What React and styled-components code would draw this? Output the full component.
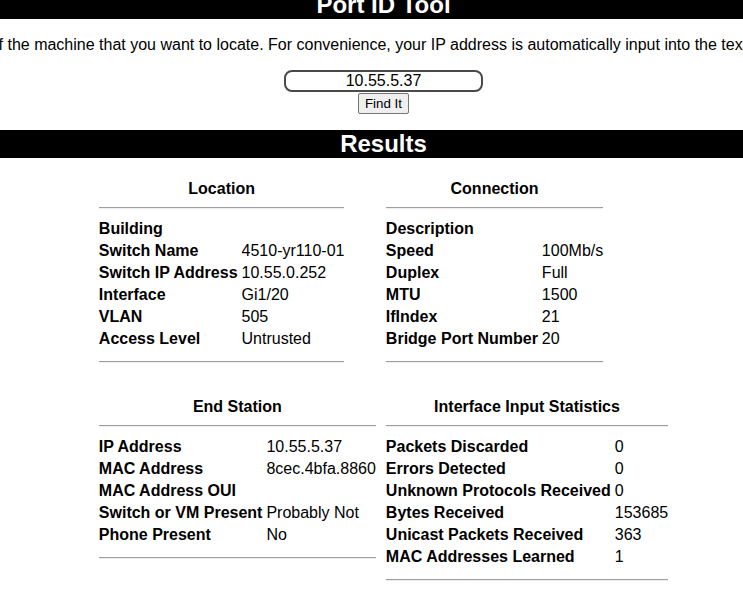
import React from "react";
import styled, { createGlobalStyle } from "styled-components";

const Global = createGlobalStyle`
  html, body { margin: 0; padding: 0; overflow: hidden; background: #fff; }
  body { font-family: "Liberation Sans", Arial, sans-serif; color: #000; }
`;

const Page = styled.div`
  width: 767px;
  display: flex;
  flex-direction: column;
  align-items: stretch;
`;

const Banner = styled.h1`
  margin: ${(p) => p.$top || 0}px 0 0 0;
  height: 28px;
  line-height: 28px;
  background: #000;
  color: #fff;
  font-size: 24px;
  font-weight: bold;
  text-align: center;
`;

const IntroRow = styled.div`
  display: flex;
  justify-content: center;
  margin: 17px 0 16px;
`;

const Intro = styled.p`
  margin: 0;
  flex: none;
  white-space: nowrap;
  font-size: 16px;
  line-height: 18px;
`;

const Form = styled.form`
  display: flex;
  flex-direction: column;
  align-items: center;
  gap: 1px;
`;

const AddressInput = styled.input`
  box-sizing: border-box;
  width: 199px;
  height: 22px;
  border: 2px solid #4a4a4a;
  border-radius: 8px;
  padding: 0 4px;
  text-align: center;
  font-family: "Liberation Sans", Arial, sans-serif;
  font-size: 16px;
  color: #000;
  outline: none;
`;

const FindButton = styled.button`
  box-sizing: border-box;
  height: 21px;
  padding: 0 6px;
  background: #efefef;
  border: 1px solid #767676;
  border-radius: 2px;
  font-family: "Liberation Sans", Arial, sans-serif;
  font-size: 13.33px;
  color: #000;
`;

const ResultsGrid = styled.div`
  margin-top: 20px;
  display: grid;
  grid-template-columns: auto auto;
  justify-content: center;
  column-gap: 10px;
  row-gap: 33px;
  align-items: start;
`;

const Section = styled.section`
  display: grid;
  grid-template-columns: auto auto;
  column-gap: 4px;
  width: max-content;
  font-size: 16px;
  line-height: 22px;
`;

const Title = styled.h2`
  grid-column: 1 / -1;
  margin: 0;
  font-size: 16px;
  line-height: 22px;
  font-weight: bold;
  text-align: center;
`;

const Rule = styled.div`
  grid-column: 1 / -1;
  margin: ${(p) => (p.$bottom ? "11px 0 0" : "7px 0 9px")};
  height: 0;
  border-top: 1px solid #9e9e9e;
  border-bottom: 1px solid #eeeeee;
`;

const Label = styled.div`
  font-weight: bold;
  white-space: nowrap;
`;

const Value = styled.div`
  white-space: nowrap;
`;

const sections = [
  {
    title: "Location",
    rows: [
      ["Building", ""],
      ["Switch Name", "4510-yr110-01"],
      ["Switch IP Address", "10.55.0.252"],
      ["Interface", "Gi1/20"],
      ["VLAN", "505"],
      ["Access Level", "Untrusted"],
    ],
  },
  {
    title: "Connection",
    rows: [
      ["Description", ""],
      ["Speed", "100Mb/s"],
      ["Duplex", "Full"],
      ["MTU", "1500"],
      ["IfIndex", "21"],
      ["Bridge Port Number", "20"],
    ],
  },
  {
    title: "End Station",
    rows: [
      ["IP Address", "10.55.5.37"],
      ["MAC Address", "8cec.4bfa.8860"],
      ["MAC Address OUI", ""],
      ["Switch or VM Present", "Probably Not"],
      ["Phone Present", "No"],
    ],
  },
  {
    title: "Interface Input Statistics",
    rows: [
      ["Packets Discarded", "0"],
      ["Errors Detected", "0"],
      ["Unknown Protocols Received", "0"],
      ["Bytes Received", "153685"],
      ["Unicast Packets Received", "363"],
      ["MAC Addresses Learned", "1"],
    ],
  },
];

export default function App() {
  return (
    <Page>
      <Global />
      <Banner $top={-9}>Port ID Tool</Banner>
      <IntroRow>
        <Intro>
          {"\u00a0of the machine that you want to locate. For convenience, your IP address is automatically input into the text box."}
        </Intro>
      </IntroRow>
      <Form onSubmit={(e) => e.preventDefault()}>
        <AddressInput defaultValue="10.55.5.37" />
        <FindButton type="submit">Find It</FindButton>
      </Form>
      <Banner $top={16}>Results</Banner>
      <ResultsGrid>
        {sections.map((s) => (
          <Section key={s.title}>
            <Title>{s.title}</Title>
            <Rule />
            {s.rows.map(([k, v]) => (
              <React.Fragment key={k}>
                <Label>{k}</Label>
                <Value>{v}</Value>
              </React.Fragment>
            ))}
            <Rule $bottom />
          </Section>
        ))}
      </ResultsGrid>
    </Page>
  );
}
